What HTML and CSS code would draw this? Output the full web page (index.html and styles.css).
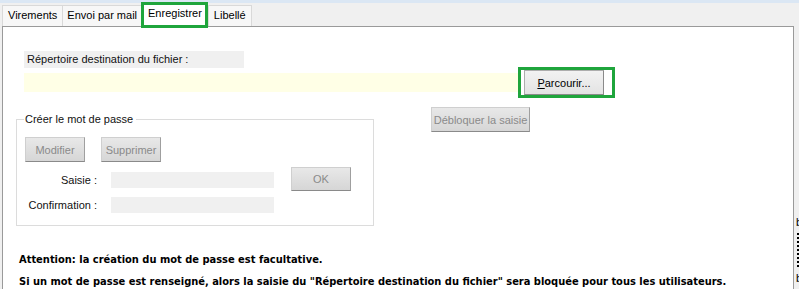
FILE: index.html
```html
<!DOCTYPE html>
<html lang="fr">
<head>
<meta charset="utf-8">
<link rel="stylesheet" href="styles.css">
</head>
<body>
<div class="window">
  <div class="topbar"></div>
  <div class="tabs">
    <div class="tab">Virements</div>
    <div class="tab tab-narrow">Envoi par mail</div>
    <div class="tab tab-active"><span class="tab-inner">Enregistrer</span></div>
    <div class="tab">Libellé</div>
  </div>
  <div class="body-row">
    <div class="panel">
      <div class="dest-label">Répertoire destination du fichier :</div>
      <div class="path-row">
        <div class="path-input"></div>
        <div class="hl-box"><button class="btn btn-browse"><u>P</u>arcourir...</button></div>
      </div>
      <div class="mid-row">
        <fieldset class="group">
          <legend>Créer le mot de passe</legend>
          <div class="group-btns">
            <button class="btn btn-disabled btn-sm">Modifier</button>
            <button class="btn btn-disabled btn-sm">Supprimer</button>
          </div>
          <div class="pw-area">
            <div class="pw-fields">
              <div class="pw-row"><span class="pw-label">Saisie :</span><span class="pw-input"></span></div>
              <div class="pw-row"><span class="pw-label">Confirmation :</span><span class="pw-input"></span></div>
            </div>
            <button class="btn btn-disabled btn-ok">OK</button>
          </div>
        </fieldset>
        <button class="btn btn-disabled btn-unlock">Débloquer la saisie</button>
      </div>
      <div class="notice">
        <p>Attention: la création du mot de passe est facultative.</p>
        <p>Si un mot de passe est renseigné, alors la saisie du "Répertoire destination du fichier" sera bloquée pour tous les utilisateurs.</p>
      </div>
    </div>
    <div class="side">
      <span class="side-b">b</span>
      <span class="side-dots"></span>
      <span class="side-b">b</span>
    </div>
  </div>
</div>
</body>
</html>
```

FILE: styles.css
```css
* { box-sizing: border-box; }
html, body { margin: 0; padding: 0; }
body {
  width: 799px;
  height: 289px;
  overflow: hidden;
  background: #f0f0f0;
  font-family: "Liberation Sans", Arial, sans-serif;
  font-size: 11px;
  color: #000;
}
.window { display: flex; flex-direction: column; height: 289px; overflow: hidden; }
.topbar { height: 3px; background: #dbe7f4; flex: none; }
.tabs {
  display: flex;
  align-items: flex-end;
  height: 23px;
  padding-left: 2px;
  flex: none;
  background: #f0f0f0;
  position: relative;
  z-index: 2;
}
.tab {
  height: 21px;
  padding: 0 5px;
  line-height: 19px;
  border: 1px solid #d9d9d9;
  border-bottom: none;
  margin-right: -1px;
  background: #f7f7f7;
  white-space: nowrap;
}
.tab-narrow { padding: 0 4px; }
.tab-active {
  height: 26px;
  margin: 0;
  padding: 0;
  border: 3px solid #1fa53c;
  background: #fff;
  position: relative;
  top: 2px;
  line-height: 17px;
}
.tab-inner { display: block; padding: 0 3px 0 4px; background: #fff; }
.body-row { display: flex; flex: 1; min-height: 0; overflow: hidden; }
.panel {
  width: 792px;
  flex: none;
  margin-left: 2px;
  border: 1px solid #9a9a9a;
  border-bottom: none;
  background: #fff;
  padding: 24px 0 0 13px;
}
.side {
  flex: 1;
  display: flex;
  flex-direction: column;
  align-items: flex-start;
  padding: 190px 0 0 2px;
  font-size: 11px;
  line-height: 12px;
  overflow: hidden;
}
.side-dots {
  width: 0;
  height: 34px;
  border-left: 2px dotted #000;
  margin: 5px 0 5px 1px;
}
.dest-label {
  width: 220px;
  height: 17px;
  margin-left: 8px;
  background: #f0f0f0;
  line-height: 17px;
  padding-left: 3px;
  color: #111;
  white-space: nowrap;
}
.path-row {
  display: flex;
  align-items: center;
  margin-top: -1px;
  margin-left: 8px;
}
.path-input {
  width: 494px;
  height: 19px;
  background: #ffffe6;
}
.hl-box {
  border: 3px solid #1fa53c;
  padding: 0 8px 0 3px;
  background: #fff;
}
.btn {
  font-family: inherit;
  font-size: 11px;
  height: 25px;
  border: 1px solid #adadad;
  background: linear-gradient(#f2f2f2, #e3e3e3);
  color: #000;
  padding: 0;
  margin: 0;
  white-space: nowrap;
  display: block;
}
.btn-browse { width: 80px; height: 25px; border-right-color: #8a8a8a; border-bottom-color: #8a8a8a; }
.btn-disabled {
  color: #8a8a8a;
  background: linear-gradient(#e8e8e8, #d6d6d6);
  border-color: #cfcfcf #9f9f9f #8a8a8a #cfcfcf;
}
.mid-row { display: flex; align-items: flex-start; }
.group {
  margin: 14px 0 0 0;
  width: 358px;
  height: 114px;
  border: 1px solid #dcdcdc;
  padding: 0 0 0 8px;
  min-width: 0;
}
.group legend {
  padding: 0 3px 0 1px;
  margin-left: -1px;
  line-height: 14px;
  color: #111;
}
.group-btns { display: flex; gap: 16px; margin-top: 11px; }
.btn-sm { width: 60px; height: 25px; }
.pw-area { display: flex; align-items: flex-start; margin-top: 5px; }
.pw-fields { display: flex; flex-direction: column; gap: 9px; margin-top: 5px; }
.pw-row { display: flex; align-items: center; }
.pw-label { width: 72px; text-align: right; line-height: 16px; color: #111; white-space: nowrap; }
.pw-input { width: 163px; height: 16px; margin-left: 14px; background: #f0f0f0; }
.btn-ok { width: 60px; height: 24px; margin-left: 17px; }
.btn-unlock { width: 99px; height: 25px; margin: 9px 0 0 57px; }
.notice { margin: 23px 0 0 3px; }
.notice p {
  margin: 0;
  font-family: "DejaVu Sans Condensed", "DejaVu Sans", sans-serif;
  font-stretch: condensed;
  font-weight: bold;
  font-size: 11px;
  line-height: 22px;
  white-space: nowrap;
}
```
